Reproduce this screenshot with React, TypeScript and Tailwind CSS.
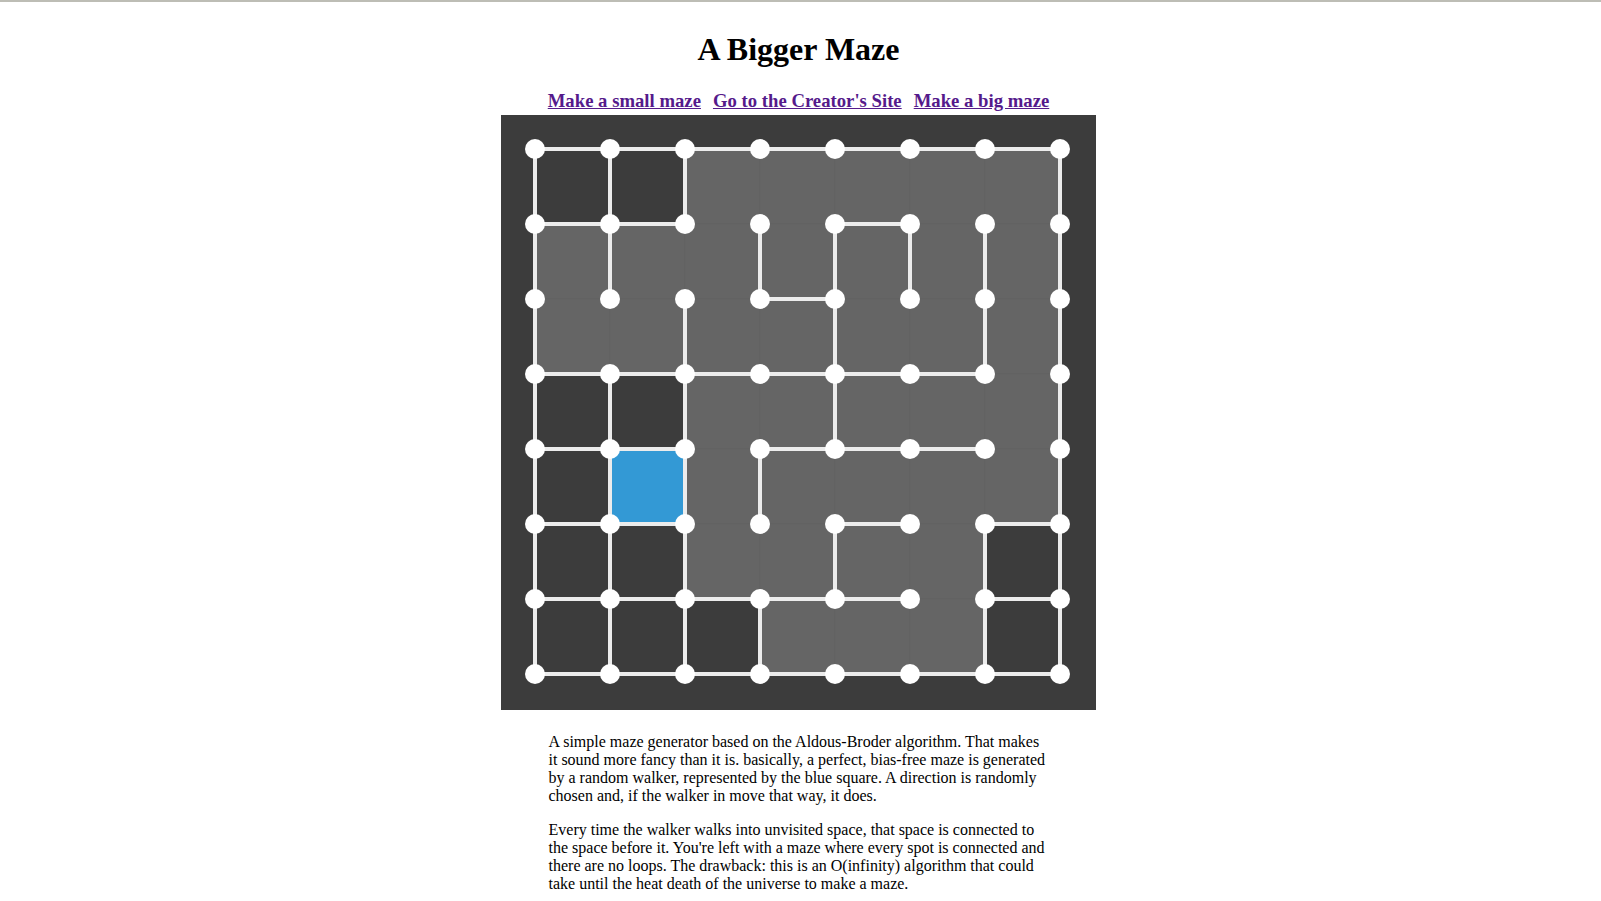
const STEP = 75;
const OFF = 34;
const N = 7;

// dark (unvisited) cells as "row-col"
const UNVISITED = new Set(['0-0', '0-1', '3-0', '3-1', '4-0', '5-0', '5-1', '5-6', '6-0', '6-1', '6-2', '6-6']);
const WALKER = '4-1';

// horizontal walls: row -> list of col segments (col to col+1)
const H_WALLS: number[][] = [
  [0, 1, 2, 3, 4, 5, 6],
  [0, 1, 4],
  [3],
  [0, 1, 2, 3, 4, 5],
  [0, 1, 3, 4, 5],
  [0, 1, 4, 6],
  [0, 1, 2, 3, 4, 6],
  [0, 1, 2, 3, 4, 5, 6],
];

// vertical walls: row -> list of cols (row to row+1)
const V_WALLS: number[][] = [
  [0, 1, 2, 7],
  [0, 1, 3, 4, 5, 6, 7],
  [0, 2, 4, 6, 7],
  [0, 1, 2, 4, 7],
  [0, 1, 2, 3, 7],
  [0, 1, 2, 4, 6, 7],
  [0, 1, 2, 3, 6, 7],
];

const p = (i: number) => OFF + i * STEP;

function Maze() {
  const cells = [];
  for (let r = 0; r < N; r++) {
    for (let c = 0; c < N; c++) {
      const key = `${r}-${c}`;
      if (UNVISITED.has(key)) continue;
      const walker = key === WALKER;
      cells.push(
        <rect
          key={key}
          x={p(c)}
          y={p(r)}
          width={STEP}
          height={STEP}
          fill={walker ? '#3399d5' : '#656565'}
          stroke={walker ? '#3399d5' : '#626262'}
          strokeWidth={0.6}
        />
      );
    }
  }

  const walls = [];
  H_WALLS.forEach((cols, r) =>
    cols.forEach((c) => walls.push(<line key={`h${r}-${c}`} x1={p(c)} y1={p(r)} x2={p(c + 1)} y2={p(r)} />))
  );
  V_WALLS.forEach((cols, r) =>
    cols.forEach((c) => walls.push(<line key={`v${r}-${c}`} x1={p(c)} y1={p(r)} x2={p(c)} y2={p(r + 1)} />))
  );

  const dots = [];
  for (let r = 0; r <= N; r++) {
    for (let c = 0; c <= N; c++) {
      dots.push(<circle key={`d${r}-${c}`} cx={p(c)} cy={p(r)} r={10} />);
    }
  }

  return (
    <svg width={595} height={595} viewBox="0 0 595 595" className="block">
      <rect width={595} height={595} fill="#3c3c3c" />
      {cells}
      <g stroke="#ececec" strokeWidth={4}>{walls}</g>
      <g fill="#ffffff">{dots}</g>
    </svg>
  );
}

export default function App() {
  return (
    <div className="min-h-[901px] bg-white text-black" style={{ fontFamily: '"Liberation Serif", "Times New Roman", serif' }}>
      <div className="h-[2px] bg-[#bdbdb5]" />
      <div className="w-[1597px] flex flex-col items-center">
        <h1 className="mt-[28.5px] text-[32px] leading-[36.8px] font-bold">A Bigger Maze</h1>

        <div className="mt-[22.4px] flex gap-[12px] text-[18.72px] leading-[21.5px] font-bold text-[#551a8b]">
          <a href="#" className="underline">Make a small maze</a>
          <a href="#" className="underline">Go to the Creator's Site</a>
          <a href="#" className="underline">Make a big maze</a>
        </div>

        <div className="mt-[4px]">
          <Maze />
        </div>

        <div className="mt-[23px] w-[500px] text-[16px] leading-[18px]">
          <p>
            A simple maze generator based on the Aldous-Broder algorithm. That makes it sound more fancy than it is.
            basically, a perfect, bias-free maze is generated by a random walker, represented by the blue square. A
            direction is randomly chosen and, if the walker in move that way, it does.
          </p>
          <p className="mt-4">
            Every time the walker walks into unvisited space, that space is connected to the space before it. You're
            left with a maze where every spot is connected and there are no loops. The drawback: this is an O(infinity)
            algorithm that could take until the heat death of the universe to make a maze.
          </p>
        </div>
      </div>
    </div>
  );
}
